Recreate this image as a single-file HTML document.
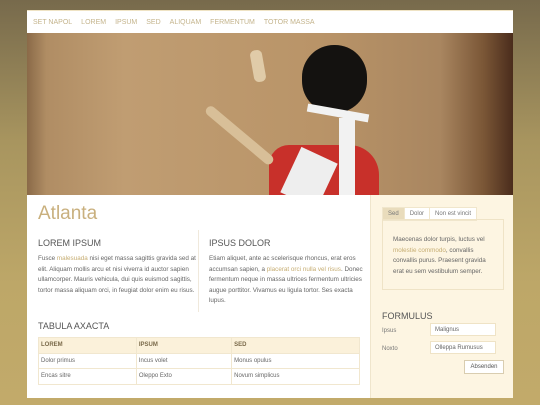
<!DOCTYPE html>
<html><head><meta charset="utf-8"><style>
*{margin:0;padding:0;box-sizing:border-box}
body{width:540px;height:405px;overflow:hidden;font-family:"Liberation Sans",sans-serif;background:linear-gradient(180deg,#776a4c 0%,#a8955f 35%,#bda768 70%,#c2aa6a 100%);position:relative}
.wrap{position:absolute;left:27px;top:10px;width:486px;height:388px;background:#f3e8cc}
.nav{height:23px;background:#fff;border-top:1px solid #efe3c4;font-size:7px;color:#c4b48c;padding:8px 0 0 6px}
.nav span{margin-right:9px}
.hero{position:absolute;top:23px;left:0;width:486px;height:162px;overflow:hidden;background:
linear-gradient(90deg,#8a6a48 0,#b08d64 4%,#c09d72 20%,#b99468 60%,#a98660 85%,#7a5636 94%,#4a2c1c 100%)}
.main{position:absolute;top:185px;left:0;width:343px;height:203px;background:#fff}
.side{position:absolute;top:185px;left:343px;width:143px;height:203px;background:#fdf5e2;border-left:1px solid #efe5cc}
h1{position:absolute;left:11px;top:8px;font-size:19px;font-weight:normal;color:#c9b07e}
h2{font-size:9px;font-weight:normal;color:#555;position:absolute}
p{font-size:6.3px;line-height:10.6px;color:#666;position:absolute}
.hl{color:#c6ad72}
table{position:absolute;left:11px;top:142px;width:322px;border-collapse:collapse;font-size:6px;color:#666}
td{border:1px solid #f1e7cf;height:15.5px;padding-left:2px}
tr:first-child td{background:#fbf1da;color:#7a6a4a;font-weight:bold}
.tabs{position:absolute;left:11px;top:12px;font-size:6px;color:#777}
.tabs span{display:inline-block;padding:3px 5px;background:#fff;border:1px solid #f0e6cc;margin-right:-1px}
.tabs span:first-child{background:#e9dcbc}
.box{position:absolute;left:11px;top:24px;width:122px;height:71px;border:1px solid #efe3c6}
.in{position:absolute;left:59px;width:66px;height:13px;background:#fff;border:1px solid #efe3c6;font-size:6px;color:#666;padding:3px 0 0 4px}
.lb{position:absolute;left:11px;font-size:6px;color:#777}
.btn{position:absolute;left:93px;top:165px;width:40px;height:14px;background:#fff;border:1px solid #d9cdb0;font-size:6px;color:#555;text-align:center;padding-top:3px}
</style></head><body>
<div class="wrap">
<div class="nav"><span>SET NAPOL</span><span>LOREM</span><span>IPSUM</span><span>SED</span><span>ALIQUAM</span><span>FERMENTUM</span><span>TOTOR MASSA</span></div>
<div class="hero">
<div style="position:absolute;left:242px;top:112px;width:110px;height:60px;background:#c8302a;border-radius:20px 30px 0 0"></div>
<div style="position:absolute;left:262px;top:120px;width:40px;height:50px;background:#eee;transform:rotate(25deg)"></div>
<div style="position:absolute;left:312px;top:85px;width:16px;height:80px;background:#f2f2f2"></div>
<div style="position:absolute;left:180px;top:70px;width:85px;height:10px;background:#d8bf98;transform:rotate(40deg);transform-origin:left;border-radius:5px"></div>
<div style="position:absolute;left:225px;top:17px;width:12px;height:32px;background:#e0cba8;border-radius:5px;transform:rotate(-10deg)"></div>
<div style="position:absolute;left:275px;top:12px;width:65px;height:68px;background:#141210;border-radius:32px"></div>
<div style="position:absolute;left:280px;top:76px;width:62px;height:8px;background:#f2f2f2;transform:rotate(10deg)"></div>
</div>
<div class="main">
<h1>Atlanta</h1>
<div style="position:absolute;left:171px;top:35px;width:1px;height:82px;background:#f0e9dc"></div>
<h2 style="left:11px;top:43px">LOREM IPSUM</h2>
<p style="left:11px;top:59px;width:158px">Fusce <span class="hl">malesuada</span> nisi eget massa sagittis gravida sed at elit. Aliquam mollis arcu et nisi viverra id auctor sapien ullamcorper. Mauris vehicula, dui quis euismod sagittis, tortor massa aliquam orci, in feugiat dolor enim eu risus.</p>
<h2 style="left:182px;top:43px">IPSUS DOLOR</h2>
<p style="left:182px;top:59px;width:155px">Etiam aliquet, ante ac scelerisque rhoncus, erat eros accumsan sapien, a <span class="hl">placerat orci nulla vel risus</span>. Donec fermentum neque in massa ultrices fermentum ultricies augue porttitor. Vivamus eu ligula tortor. Ses exacta lupus.</p>
<h2 style="left:11px;top:126px">TABULA AXACTA</h2>
<table><tr><td>LOREM</td><td>IPSUM</td><td>SED</td></tr><tr><td>Dolor primus</td><td>Incus volet</td><td>Monus opulus</td></tr><tr><td>Encas sitre</td><td>Oleppo Exto</td><td>Novum simplicus</td></tr></table>
</div>
<div class="side">
<div class="tabs"><span>Sed</span><span>Dolor</span><span>Non est vincit</span></div>
<div class="box"><p style="left:10px;top:15px;width:104px">Maecenas dolor turpis, luctus vel <span class="hl">molestie commodo</span>, convallis convallis purus. Praesent gravida erat eu sem vestibulum semper.</p></div>
<h2 style="left:11px;top:116px">FORMULUS</h2>
<div class="lb" style="top:133px">Ipsus</div><div class="in" style="top:128px">Malignus</div>
<div class="lb" style="top:151px">Noxto</div><div class="in" style="top:146px">Olleppa Rumusus</div>
<div class="btn">Absenden</div>
</div>
</div>
</body></html>
